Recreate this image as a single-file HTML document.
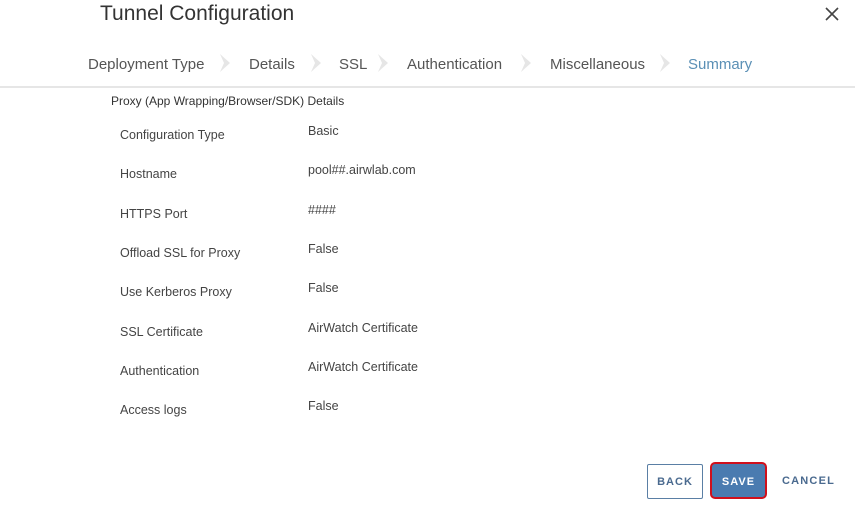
<!DOCTYPE html>
<html><head><style>
body{margin:0;width:855px;height:512px;background:#fff;font-family:"Liberation Sans",sans-serif;position:relative;overflow:hidden;color:#333}
.a{position:absolute;white-space:nowrap}
.t{font-size:15px;color:#555;top:56px}
.ch{position:absolute;top:54px;width:12px;height:18px}
.l{left:120px;font-size:12.5px;color:#444}
.v{left:308px;font-size:12.5px;color:#444}
</style></head><body>
<div class="a" style="left:100px;top:2px;font-size:21px;color:#333">Tunnel Configuration</div>
<svg class="a" style="left:825px;top:7px" width="14" height="14" viewBox="0 0 14 14"><path d="M1 1L13 13M13 1L1 13" stroke="#444" stroke-width="1.6" fill="none"/></svg>
<div class="a t" style="left:88px">Deployment Type</div>
<div class="a t" style="left:249px">Details</div>
<div class="a t" style="left:339px">SSL</div>
<div class="a t" style="left:407px">Authentication</div>
<div class="a t" style="left:550px">Miscellaneous</div>
<div class="a t" style="left:688px;color:#5a8fb5">Summary</div>
<svg class="ch" style="left:219px" viewBox="0 0 12 18"><path d="M1 0L11 9L1 18L5 9Z" fill="#e6e6e6"/></svg>
<svg class="ch" style="left:310px" viewBox="0 0 12 18"><path d="M1 0L11 9L1 18L5 9Z" fill="#e6e6e6"/></svg>
<svg class="ch" style="left:377px" viewBox="0 0 12 18"><path d="M1 0L11 9L1 18L5 9Z" fill="#e6e6e6"/></svg>
<svg class="ch" style="left:520px" viewBox="0 0 12 18"><path d="M1 0L11 9L1 18L5 9Z" fill="#e6e6e6"/></svg>
<svg class="ch" style="left:659px" viewBox="0 0 12 18"><path d="M1 0L11 9L1 18L5 9Z" fill="#e6e6e6"/></svg>
<div class="a" style="left:0;top:86px;width:855px;height:2px;background:#e6e6e6"></div>
<div class="a" style="left:111px;top:94px;font-size:12px;color:#333">Proxy (App Wrapping/Browser/SDK) Details</div>
<div class="a l" style="top:128px">Configuration Type</div><div class="a v" style="top:124px">Basic</div>
<div class="a l" style="top:167px">Hostname</div><div class="a v" style="top:163px">pool##.airwlab.com</div>
<div class="a l" style="top:207px">HTTPS Port</div><div class="a v" style="top:203px">####</div>
<div class="a l" style="top:246px">Offload SSL for Proxy</div><div class="a v" style="top:242px">False</div>
<div class="a l" style="top:285px">Use Kerberos Proxy</div><div class="a v" style="top:281px">False</div>
<div class="a l" style="top:325px">SSL Certificate</div><div class="a v" style="top:321px">AirWatch Certificate</div>
<div class="a l" style="top:364px">Authentication</div><div class="a v" style="top:360px">AirWatch Certificate</div>
<div class="a l" style="top:403px">Access logs</div><div class="a v" style="top:399px">False</div>
<div class="a" style="left:647px;top:464px;width:54px;height:33px;border:1px solid #5a7fa5;border-radius:2px;color:#4a6a8f;font-size:11px;font-weight:bold;letter-spacing:1px;text-align:center;line-height:34px">BACK</div>
<div class="a" style="left:710px;top:462px;width:53px;height:33px;border:2px solid #d0101c;border-radius:5px;background:#4a7bb0;color:#fff;font-size:11px;font-weight:bold;letter-spacing:1px;text-align:center;line-height:36px">SAVE</div>
<div class="a" style="left:782px;top:475px;color:#4a6a8f;font-size:11px;font-weight:bold;letter-spacing:1.2px">CANCEL</div>
</body></html>
